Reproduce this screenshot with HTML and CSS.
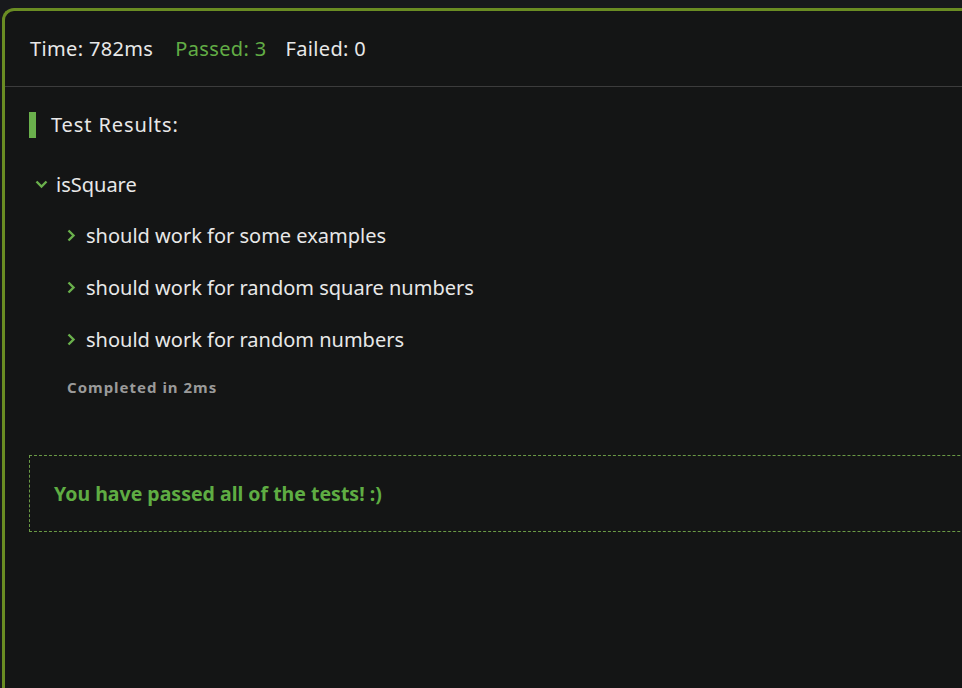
FILE: index.html
```html
<!DOCTYPE html>
<html>
<head>
<meta charset="utf-8">
<link rel="stylesheet" href="styles.css">
</head>
<body>
<div class="panel">
  <div class="stats">
    <span class="stat">Time: 782ms</span>
    <span class="stat passed">Passed: 3</span>
    <span class="stat">Failed: 0</span>
  </div>
  <div class="results">
    <h2 class="title">Test Results:</h2>
    <div class="suite">
      <div class="suite-head">
        <svg class="chev" width="13" height="9" viewBox="0 0 13 9"><path d="M1.5 1.5 L6.5 6.5 L11.5 1.5" fill="none" stroke="#6ab04c" stroke-width="2.4"/></svg>
        <span>isSquare</span>
      </div>
      <div class="tests">
        <div class="test">
          <svg class="chev-r" width="9" height="13" viewBox="0 0 9 13"><path d="M1.5 1.5 L6.5 6.5 L1.5 11.5" fill="none" stroke="#6ab04c" stroke-width="2.4"/></svg>
          <span>should work for some examples</span>
        </div>
        <div class="test">
          <svg class="chev-r" width="9" height="13" viewBox="0 0 9 13"><path d="M1.5 1.5 L6.5 6.5 L1.5 11.5" fill="none" stroke="#6ab04c" stroke-width="2.4"/></svg>
          <span>should work for random square numbers</span>
        </div>
        <div class="test">
          <svg class="chev-r" width="9" height="13" viewBox="0 0 9 13"><path d="M1.5 1.5 L6.5 6.5 L1.5 11.5" fill="none" stroke="#6ab04c" stroke-width="2.4"/></svg>
          <span>should work for random numbers</span>
        </div>
        <div class="completed">Completed in 2ms</div>
      </div>
    </div>
    <div class="success">You have passed all of the tests! :)</div>
  </div>
</div>
</body>
</html>
```
FILE: styles.css
```css
html, body {
  margin: 0;
  padding: 0;
  background: #18191c;
  overflow: hidden;
  height: 100%;
}
body {
  font-family: "Noto Sans", sans-serif;
  color: #e8e8e8;
  padding-top: 8px;
  padding-left: 2px;
  box-sizing: border-box;
}
.panel {
  width: 1100px;
  height: 800px;
  background: #141515;
  border-top: 3px solid #6a8c23;
  border-left: 3px solid #6a8c23;
  border-top-left-radius: 12px;
}
.stats {
  height: 75px;
  border-bottom: 1px solid #3c3c3c;
  display: flex;
  align-items: center;
  padding-left: 25px;
  font-size: 20px;
  letter-spacing: 0.35px;
}
.stat { margin-right: 22px; }
.stat.passed { margin-right: 19px; }
.passed { color: #62ad45; }
.results {
  padding: 25px 0 0 24px;
}
.title {
  margin: 0;
  font-size: 20px;
  font-weight: 400;
  border-left: 7px solid #6ab04c;
  padding-left: 15px;
  height: 26px;
  line-height: 26px;
  letter-spacing: 0.9px;
}
.suite { margin-top: 33px; }
.suite-head {
  display: flex;
  align-items: center;
  font-size: 20px;
  height: 26px;
  padding-left: 6px;
  gap: 8px;
}
.tests { padding-left: 38px; }
.test {
  display: flex;
  align-items: center;
  font-size: 20px;
  height: 26px;
  margin-top: 26px;
  gap: 10px;
}
.test:first-child { margin-top: 25px; }
.completed {
  margin-top: 25px;
  font-size: 15px;
  font-weight: 700;
  color: #9a9a9a;
  letter-spacing: 1px;
  height: 20px;
  line-height: 20px;
}
.success {
  margin-top: 58px;
  border: 1px dashed #6a9a45;
  height: 75px;
  display: flex;
  align-items: center;
  padding-left: 24px;
  font-size: 19.5px;
  font-weight: 700;
  color: #5fad43;
}
```
